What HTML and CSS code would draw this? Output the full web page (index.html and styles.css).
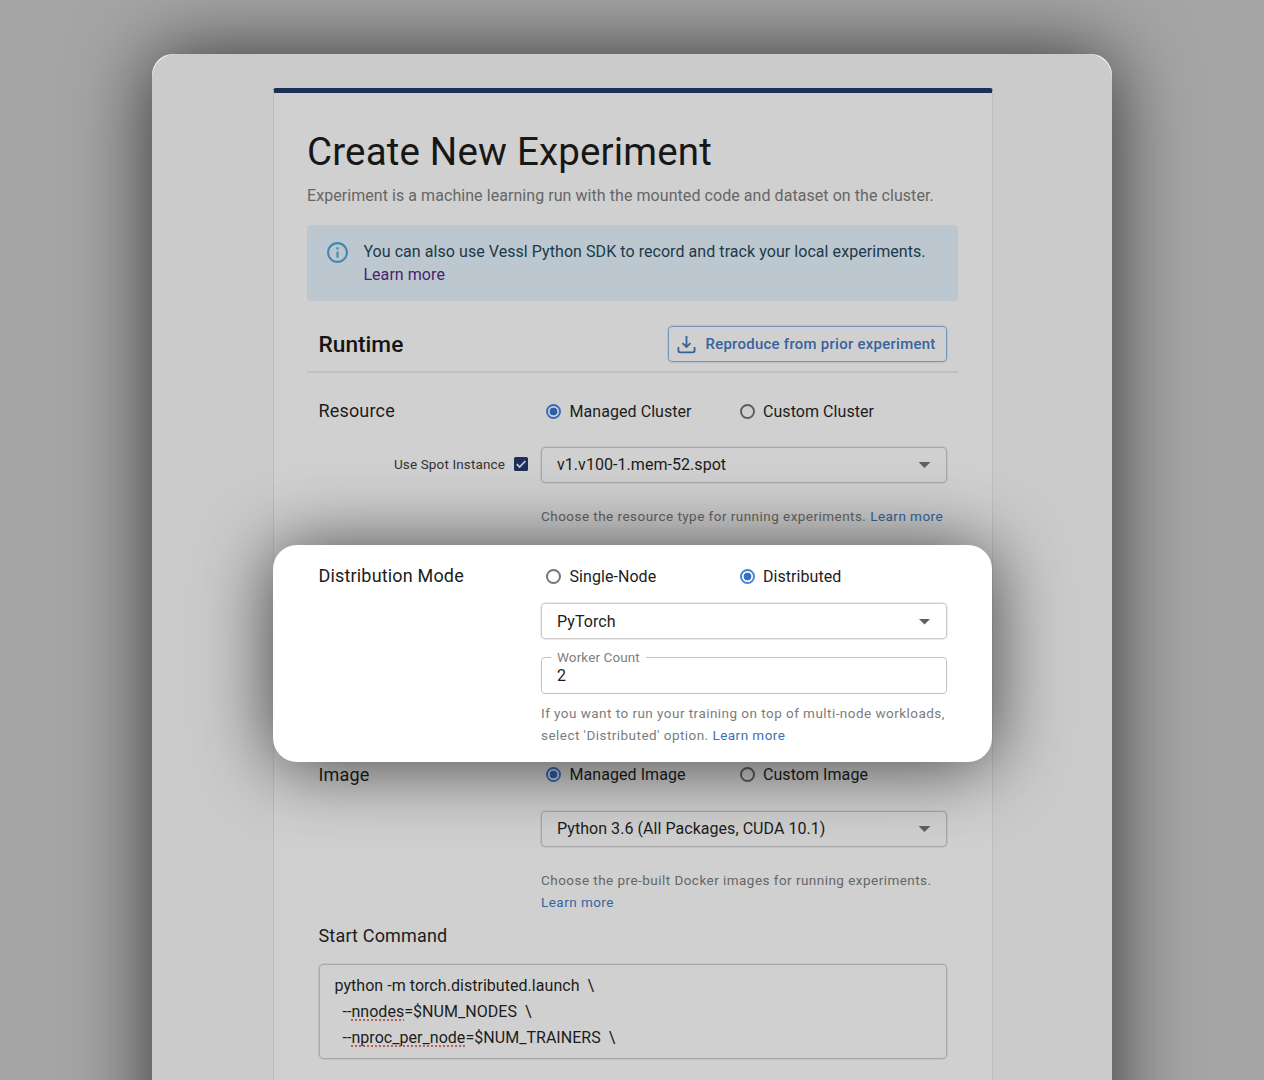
FILE: index.html
```html
<!DOCTYPE html>
<html lang="en">
<head>
<meta charset="utf-8">
<title>Create New Experiment</title>
<link rel="stylesheet" href="styles.css">
</head>
<body>
<main class="panel">
 <div class="surface">
  <form class="card">
    <h1 class="title">Create New Experiment</h1>
    <p class="subtitle">Experiment is a machine learning run with the mounted code and dataset on the cluster.</p>

    <div class="alert">
      <svg class="alert-icon" viewBox="0 0 24 24"><path d="M11 7h2v2h-2zm0 4h2v6h-2zm1-9C6.480 2 2 6.480 2 12s4.480 10 10 10 10-4.480 10-10S17.520 2 12 2zm0 18c-4.410 0-8-3.590-8-8s3.590-8 8-8 8 3.590 8 8-3.590 8-8 8z"/></svg>
      <div class="alert-text">You can also use Vessl Python SDK to record and track your local experiments.<br><a class="visited">Learn more</a></div>
    </div>

    <div class="section-head">
      <h2 class="section-title">Runtime</h2>
      <button type="button" class="outline-btn">
        <svg class="btn-icon" viewBox="0 0 20 20"><path d="M10 1v11.500M5.800 8.500l4.200 4.200 4.200-4.200M1.500 12.500v3.900q0 1.800 1.800 1.800h13.400q1.800 0 1.800-1.800v-3.900"/></svg>
        <span>Reproduce from prior experiment</span>
      </button>
    </div>

    <section class="row resource">
      <div class="label">Resource</div>
      <div class="radios">
        <label class="radio on"><i class="dot"></i><span>Managed Cluster</span></label>
        <label class="radio"><i class="dot"></i><span>Custom Cluster</span></label>
      </div>
      <div class="spot"><span>Use Spot Instance</span>
        <svg class="check" viewBox="0 0 14 14"><rect width="14" height="14" rx="1.600"/><path d="M2.800 7.200l2.800 2.800 5.800-6"/></svg>
      </div>
      <div class="select"><span>v1.v100-1.mem-52.spot</span><i class="caret"></i></div>
      <p class="help">Choose the resource type for running experiments. <a class="link">Learn more</a></p>
    </section>

    <section class="row spotlight">
      <div class="label">Distribution Mode</div>
      <div class="radios">
        <label class="radio"><i class="dot"></i><span>Single-Node</span></label>
        <label class="radio on"><i class="dot"></i><span>Distributed</span></label>
      </div>
      <div class="select"><span>PyTorch</span><i class="caret"></i></div>
      <fieldset class="field"><legend>Worker Count</legend><span class="value">2</span></fieldset>
      <p class="help">If you want to run your training on top of multi-node workloads,<br>select 'Distributed' option. <a class="link">Learn more</a></p>
    </section>

    <section class="row image">
      <div class="label">Image</div>
      <div class="radios">
        <label class="radio on"><i class="dot"></i><span>Managed Image</span></label>
        <label class="radio"><i class="dot"></i><span>Custom Image</span></label>
      </div>
      <div class="select"><span>Python 3.6 (All Packages, CUDA 10.1)</span><i class="caret"></i></div>
      <p class="help">Choose the pre-built Docker images for running experiments.<br><a class="link">Learn more</a></p>
    </section>

    <section class="command">
      <div class="label">Start Command</div>
      <pre class="code">python -m torch.distributed.launch  \
  --<u>nnodes</u>=$NUM_NODES  \
  --<u>nproc_per_node</u>=$NUM_TRAINERS  \</pre>
    </section>
  </form>
 </div>
</main>
</body>
</html>
```
FILE: styles.css
```css
* { box-sizing: border-box; }
html, body { margin: 0; height: 1080px; overflow: hidden; }
body {
  padding: 54px 152px 0;
  background: #a5a5a5;
  font-family: Roboto, "Liberation Sans", sans-serif;
  color: #1c1c1c;
}
h1, h2, p, pre { margin: 0; font-weight: 400; }
.panel {
  height: 1120px;
  border-radius: 21px;
  background: #f4f4f4;
  box-shadow: 0 1px 80px rgba(0, 0, 0, .7);
}
.surface {
  height: 1026px;
  padding: 34px 119px 0 121px;
  border-radius: 24px 24px 0 0;
  background: #cbcbcb;
}
.card {
  width: 720px;
  height: 992px;
  padding: 34px 34px 0 33px;
  border: 1px solid #bdbdbd;
  border-top: 5px solid #1c2f57;
  border-bottom: 0;
  border-radius: 3px 3px 0 0;
  background: #d0d0d0;
}
.title { height: 50px; line-height: 50px; font-size: 38.500px; letter-spacing: .17px; color: #171717; }
.subtitle { margin-top: 7px; line-height: 24px; font-size: 16px; letter-spacing: .06px; color: #666; }
.alert {
  display: flex;
  height: 76px;
  margin-top: 17px;
  padding: 16px 18px;
  border-radius: 4px;
  background: #bdc7cf;
}
.alert-icon { width: 25px; height: 25px; margin-top: -1.500px; fill: #3c8ab5; }
.alert-text { margin-left: 13.400px; line-height: 22.800px; font-size: 16px; letter-spacing: .06px; color: #1b3a4b; }
.visited { color: #47246e; }
.section-head {
  display: flex;
  align-items: center;
  justify-content: space-between;
  height: 72px;
  padding: 16px 11px 0 11.500px;
  border-bottom: 2px solid #c1c1c1;
}
.section-title { font-size: 22.700px; font-weight: 500; color: #141414; }
.outline-btn {
  display: flex;
  align-items: center;
  gap: 9.500px;
  width: 279px;
  height: 36px;
  padding: 0 0 0 8px;
  border: 1px solid #7895bb;
  border-radius: 4px;
  background: none;
  box-shadow: 0 0 0 .5px rgba(120, 149, 187, .5);
  color: #36639f;
  font: 500 14.900px Roboto, sans-serif;
  letter-spacing: .3px;
  white-space: nowrap;
}
.btn-icon { width: 19px; height: 19px; fill: none; stroke: #36639f; stroke-width: 1.900; }
.row { display: grid; grid-template-columns: 222.500px 405.500px; align-content: start; padding: 0 11px 0 11.500px; }
.label { line-height: 24px; font-size: 18px; letter-spacing: .17px; }
.radios { display: grid; grid-template-columns: 193.500px 1fr; padding-left: 5px; }
.radio { display: flex; align-items: center; gap: 8.500px; height: 24px; font-size: 16px; letter-spacing: .06px; }
.dot { width: 15px; height: 15px; border: 2px solid #5e5e5e; border-radius: 50%; }
.on .dot { border-color: #3a6db5; background: radial-gradient(circle, #2c5fae 0 3.600px, transparent 4.200px); }
.select {
  display: flex;
  grid-column: 2;
  align-items: center;
  justify-content: space-between;
  height: 36px;
  padding: 0 15px 1px 15px;
  border: 1px solid #a8a8a8;
  border-radius: 4px;
  box-shadow: 0 0 0 .5px rgba(168, 168, 168, .6);
  font-size: 16px;
  letter-spacing: .05px;
}
.caret { width: 12px; height: 6px; margin-top: 1px; background: #616161; clip-path: polygon(0 0, 100% 0, 50% 100%); }
.help { grid-column: 2; line-height: 22px; font-size: 13.500px; letter-spacing: .46px; color: #666; white-space: nowrap; }
.link { color: #36639f; }
.spot { display: flex; align-items: center; justify-content: flex-end; gap: 9px; height: 35px; padding-right: 13px; font-size: 13.500px; letter-spacing: .13px; color: #333; }
.check { width: 14px; height: 14px; fill: #1d2f5b; }
.check path { fill: none; stroke: #d0d0d0; stroke-width: 1.700; }
.resource { height: 172px; padding-top: 26px; }
.resource .spot { margin-top: 23px; }
.resource .select { margin-top: 24px; }
.resource .help { margin-top: 22px; }
.spotlight {
  position: relative;
  z-index: 1;
  height: 217px;
  margin: 0 -34px;
  padding: 19px 45px 0 45.500px;
  border-radius: 24px;
  background: #fff;
  box-shadow: 0 3px 74px rgba(0, 0, 0, .68);
}
.spotlight .dot { border-color: #757575; }
.spotlight .on .dot { border-color: #4685d0; background: radial-gradient(circle, #3470c8 0 3.600px, transparent 4.200px); }
.spotlight .select { margin-top: 15px; padding-bottom: 0; border-color: #cbcbcb; box-shadow: 0 0 0 .5px rgba(203, 203, 203, .7); }
.spotlight .help { margin-top: 8px; color: #7c7c7c; }
.spotlight .link { color: #3e6fb4; }
.field { grid-column: 2; height: 44px; margin: 11px 0 0; padding: 0 15px; border: 1px solid #c2c2c2; border-radius: 4px; }
.field legend { margin-left: -6px; padding: 0 6px; line-height: 15px; font-size: 13.500px; letter-spacing: .1px; color: #808080; }
.value { display: block; line-height: 22px; font-size: 16px; }
.image { height: 160px; padding-top: 1px; }
.image .radio { height: 23px; }
.image .select { margin-top: 24px; }
.image .help { margin-top: 22px; }
.command { padding: 2px 11px 0 11.500px; }
.code {
  height: 95px;
  margin-top: 16px;
  padding: 8px 15px;
  border: 1px solid #a8a8a8;
  border-radius: 4px;
  box-shadow: 0 0 0 .5px rgba(168, 168, 168, .6);
  font: 16px/26px Roboto, sans-serif;
  letter-spacing: .04px;
}
.code u { text-decoration: underline dotted #b5605a 2px; text-underline-offset: 1.500px; text-decoration-skip-ink: none; }
```
